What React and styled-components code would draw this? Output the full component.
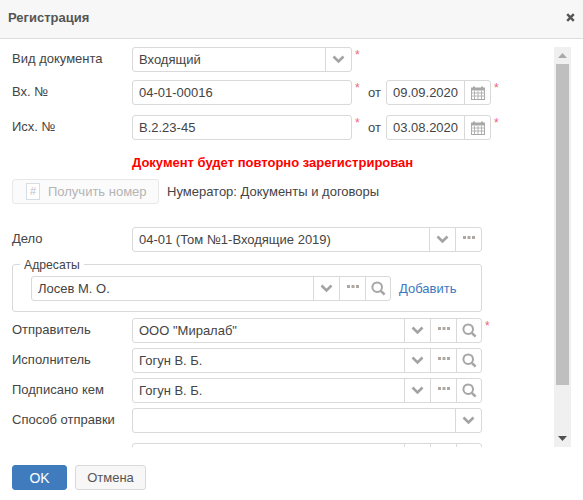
import React from "react";
import styled, { createGlobalStyle } from "styled-components";

const Global = createGlobalStyle`
  html, body { margin: 0; padding: 0; background: #fff; }
  body { font-family: "Liberation Sans", Arial, sans-serif; font-size: 13px; color: #444; }
`;

const Dialog = styled.div`
  width: 583px; height: 500px; display: flex; flex-direction: column; overflow: hidden; background: #fff;
`;
const Header = styled.header`
  height: 39px; flex: none; display: flex; align-items: center; justify-content: space-between;
  padding: 0 5px 3px 8px; box-sizing: border-box; background: #f7f7f7; border-bottom: 1px solid #ddd;
`;
const Title = styled.h1`
  margin: 0; font-size: 13px; font-weight: bold; color: #555;
`;
const Main = styled.div`
  height: 408px; flex: none; display: flex;
`;
const Form = styled.div`
  width: 542px; height: 400px; overflow: hidden; box-sizing: content-box; padding: 8px 0 0 12px;
  display: flex; flex-direction: column;
`;
const Row = styled.div`
  display: flex; align-items: flex-start; flex: none; margin-top: ${p => p.$top || 0}px;
`;
const Label = styled.label`
  width: 120px; flex: none; font-size: 13px; line-height: 15px; padding-top: 4px; color: #444;
`;
const Field = styled.div`
  width: ${p => p.$w}px; height: 25px; flex: none; box-sizing: border-box; display: flex; align-items: stretch;
  border: 1px solid #d9d9d9; border-radius: 3px; background: #fff;
`;
const Value = styled.div`
  flex: 1; min-width: 0; padding-left: 6px; font-size: 13px; line-height: 23px; color: #444; white-space: nowrap;
`;
const Addon = styled.div`
  width: ${p => p.$w || 26}px; flex: none; box-sizing: border-box; border-left: 1px solid #d9d9d9;
  display: flex; align-items: center; justify-content: center;
`;
const Star = styled.span`
  width: ${p => p.$w || 12}px; flex: none; color: #f0607e; font-size: 12px; line-height: 14px; padding: 1px 0 0 3px; box-sizing: border-box;
`;
const From = styled.span`
  width: 18px; flex: none; font-size: 13px; line-height: 25px; color: #444; text-align: left;
`;
const Warning = styled.div`
  margin: 15px 0 0 120px; font-size: 13px; font-weight: bold; line-height: 15px; color: #f00;
`;
const NumberButton = styled.button`
  width: 147px; height: 25px; flex: none; box-sizing: border-box; border: 1px solid #e8e8e8; border-radius: 3px;
  background: #fbfbfb; font: 13px "Liberation Sans", Arial, sans-serif; color: #b4b4b4;
  display: flex; align-items: center; gap: 8px; padding: 0 0 0 13px;
`;
const Hash = styled.span`
  width: 14px; height: 17px; box-sizing: border-box; border: 1px solid #d5dde5; font-size: 11px; line-height: 15px;
  text-align: center; color: #c0c0c0; background: #fff;
`;
const NumText = styled.span`
  margin-left: 8px; font-size: 13px; line-height: 25px; color: #444;
`;
const Group = styled.fieldset`
  width: 470px; height: 48px; margin: 12px 0 0 0; box-sizing: border-box; flex: none; border: 1px solid #d9d9d9; border-radius: 3px;
  padding: 0 0 0 18px; display: block;
`;
const Legend = styled.legend`
  margin-left: -11px; padding: 0 4px; font-size: 12.2px; line-height: 13px; color: #444; height: 0;
  transform: translateY(-6px);
`;
const GroupRow = styled.div`
  display: flex; align-items: center; margin-top: 11px;
`;
const AddLink = styled.a`
  margin-left: 8px; font-size: 13px; color: #3c78c0; text-decoration: none;
`;
const Scrollbar = styled.div`
  width: 17px; height: 400px; margin-top: 8px; background: #f0f0f0; flex: none; display: flex; flex-direction: column; align-items: center;
`;
const ScrollTop = styled.div`
  height: 17px; flex: none; display: flex; align-items: center; justify-content: center;
`;
const Thumb = styled.div`
  width: 13px; height: 321px; flex: none; background: #bfbfbf;
`;
const ScrollBottom = styled.div`
  margin-top: auto; height: 17px; flex: none; display: flex; align-items: center; justify-content: center;
`;
const Footer = styled.footer`
  flex: 1; display: flex; align-items: flex-start; gap: 8px; padding: 18px 0 0 12px;
`;
const Ok = styled.button`
  width: 55px; height: 25px; box-sizing: border-box; border: 1px solid #3f7bbd; border-radius: 3px; background: #3f7bbd;
  color: #fff; font: 14px "Liberation Sans", Arial, sans-serif; padding: 0;
`;
const Cancel = styled.button`
  width: 71px; height: 25px; box-sizing: border-box; border: 1px solid #d9d9d9; border-radius: 3px; background: #f7f7f7;
  color: #555; font: 13px "Liberation Sans", Arial, sans-serif; padding: 0;
`;

const Chevron = () => (
  <svg width="13" height="9" viewBox="0 0 13 9"><path d="M1.5 1.5 L6.5 6.5 L11.5 1.5" fill="none" stroke="#a3a3a3" strokeWidth="2.6" /></svg>
);
const Dots = () => (
  <svg width="12" height="4" viewBox="0 0 12 4" style={{ marginTop: -3 }}><path d="M0 0h3v3H0zM4.5 0h3v3h-3zM9 0h3v3H9z" fill="#b0a8a0" /></svg>
);
const Search = () => (
  <svg width="15" height="15" viewBox="0 0 15 15" style={{ marginTop: -1 }}><circle cx="6.2" cy="6.2" r="4.8" fill="none" stroke="#a6a6a6" strokeWidth="2" /><path d="M9.8 9.8 L13.6 13.6" stroke="#a6a6a6" strokeWidth="2.6" /></svg>
);
const Calendar = () => (
  <svg width="14" height="14" viewBox="0 0 14 14">
    <rect x="0.5" y="2" width="13" height="11.5" fill="#fff" stroke="#a8a8a8" />
    <rect x="0.5" y="2" width="13" height="2.5" fill="#a8a8a8" />
    <path d="M3 0.5v3M11 0.5v3" stroke="#a8a8a8" strokeWidth="2" />
    <path d="M0 7h14M0 10h14M3.5 5v8M7 5v8M10.5 5v8" stroke="#b4b4b4" />
  </svg>
);
const Arrow = ({ up, color }) => (
  <svg width="9" height="5" viewBox="0 0 9 5"><path d={up ? "M4.5 0 L9 5 H0Z" : "M0 0 H9 L4.5 5Z"} fill={color} /></svg>
);

const Combo = ({ w, value, dots, search }) => (
  <Field $w={w}>
    <Value>{value}</Value>
    <Addon $w={26}><Chevron /></Addon>
    {dots && <Addon $w={26}><Dots /></Addon>}
    {search && <Addon $w={25}><Search /></Addon>}
  </Field>
);

const DateField = ({ value }) => (
  <Field $w={105}>
    <Value>{value}</Value>
    <Addon $w={26}><Calendar /></Addon>
  </Field>
);

export default function App() {
  return (
    <Dialog>
      <Global />
      <Header>
        <Title>Регистрация</Title>
        <svg width="9" height="9" viewBox="0 0 9 9" style={{ marginRight: 3 }}><path d="M1.2 1.2 L7.8 7.8 M7.8 1.2 L1.2 7.8" stroke="#555" strokeWidth="2.4" /></svg>
      </Header>
      <Main>
        <Form>
          <Row>
            <Label>Вид документа</Label>
            <Combo w={220} value="Входящий" />
            <Star>*</Star>
          </Row>
          <Row $top={8}>
            <Label>Вх. №</Label>
            <Field $w={220}><Value>04-01-00016</Value></Field>
            <Star $w={16}>*</Star>
            <From>от</From>
            <DateField value="09.09.2020" />
            <Star>*</Star>
          </Row>
          <Row $top={10}>
            <Label>Исх. №</Label>
            <Field $w={220}><Value>В.2.23-45</Value></Field>
            <Star $w={16}>*</Star>
            <From>от</From>
            <DateField value="03.08.2020" />
            <Star>*</Star>
          </Row>
          <Warning>Документ будет повторно зарегистрирован</Warning>
          <Row $top={9}>
            <NumberButton disabled><Hash>#</Hash>Получить номер</NumberButton>
            <NumText>Нумератор: Документы и договоры</NumText>
          </Row>
          <Row $top={23}>
            <Label>Дело</Label>
            <Combo w={350} value="04-01 (Том №1-Входящие 2019)" dots />
          </Row>
          <Group>
            <Legend>Адресаты</Legend>
            <GroupRow>
              <Combo w={360} value="Лосев М. О." dots search />
              <AddLink>Добавить</AddLink>
            </GroupRow>
          </Group>
          <Row $top={6}>
            <Label>Отправитель</Label>
            <Combo w={350} value={'ООО "Миралаб"'} dots search />
            <Star>*</Star>
          </Row>
          <Row $top={5}>
            <Label>Исполнитель</Label>
            <Combo w={350} value="Гогун В. Б." dots search />
          </Row>
          <Row $top={5}>
            <Label>Подписано кем</Label>
            <Combo w={350} value="Гогун В. Б." dots search />
          </Row>
          <Row $top={5}>
            <Label>Способ отправки</Label>
            <Combo w={350} value="" />
          </Row>
          <Row $top={10}>
            <Label />
            <Combo w={350} value="" dots search />
          </Row>
        </Form>
        <Scrollbar>
          <ScrollTop><Arrow up color="#a9a9a9" /></ScrollTop>
          <Thumb />
          <ScrollBottom><Arrow color="#505050" /></ScrollBottom>
        </Scrollbar>
      </Main>
      <Footer>
        <Ok>OK</Ok>
        <Cancel>Отмена</Cancel>
      </Footer>
    </Dialog>
  );
}
